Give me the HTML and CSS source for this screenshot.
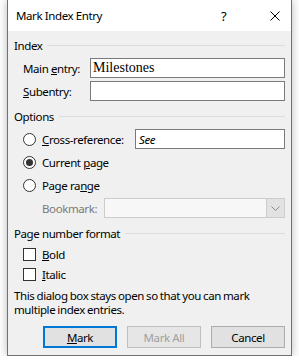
FILE: index.html
```html
<!DOCTYPE html>
<html lang="en">
<head>
  <meta charset="UTF-8">
  <title>Mark Index Entry</title>
  <link rel="stylesheet" href="styles.css">
</head>
<body>
  <div class="dialog">
    <div class="titlebar">
      <span class="title">Mark Index Entry</span>
      <span class="help">?</span>
      <span class="close">
        <svg width="10" height="10" viewBox="0 0 10 10"><path d="M0.5 0.5 L9.5 9.5 M9.5 0.5 L0.5 9.5" stroke="#000" stroke-width="1" fill="none"/></svg>
      </span>
    </div>

    <div class="content">
      <div class="group-head first"><span>Index</span></div>
      <div class="row row-gap-5">
        <span class="label">Main <u>e</u>ntry:</span>
        <div class="input wide serif">Milestones</div>
      </div>
      <div class="row">
        <span class="label"><u>S</u>ubentry:</span>
        <div class="input wide"></div>
      </div>

      <div class="group-head"><span>Options</span></div>
      <div class="row row-gap-5">
        <span class="radio"></span>
        <span class="label opt-label"><u>C</u>ross-reference:</span>
        <div class="input see">See</div>
      </div>
      <div class="row">
        <span class="radio checked"></span>
        <span class="label">Current <u>p</u>age</span>
      </div>
      <div class="row">
        <span class="radio"></span>
        <span class="label">Page ra<u>n</u>ge</span>
      </div>
      <div class="row">
        <span class="label disabled bookmark-label">Bookmark:</span>
        <div class="combo">
          <span class="combo-btn">
            <svg width="9" height="5" viewBox="0 0 9 5"><path d="M0.5 0.5 L4.5 4.5 L8.5 0.5" stroke="#8a8a8a" stroke-width="1" fill="none"/></svg>
          </span>
        </div>
      </div>

      <div class="group-head"><span>Page number format</span></div>
      <div class="row check-row first-check">
        <span class="checkbox"></span>
        <span class="label"><u>B</u>old</span>
      </div>
      <div class="row check-row">
        <span class="checkbox"></span>
        <span class="label"><u>I</u>talic</span>
      </div>

      <p class="note">This dialog box stays open so that you can mark multiple index entries.</p>

      <div class="buttons">
        <button class="btn default"><u>M</u>ark</button>
        <button class="btn" disabled>Mark All</button>
        <button class="btn">Cancel</button>
      </div>
    </div>
  </div>
</body>
</html>
```

FILE: styles.css
```css
/* Windows style dialog */
body {
  margin: 0;
  background-color: #fff;
  font-family: "Noto Sans", Arial, sans-serif;
  font-size: 11.5px;
  letter-spacing: -0.4px;
  color: #000;
}

.dialog {
  margin-left: 7px;
  width: 285px;
  height: 356px;
  box-sizing: border-box;
  background-color: #f0f0f0;
  border: 1px solid #707070;
  border-top: none;
  box-shadow: 0 0 9px rgba(0, 0, 0, 0.28);
}

.titlebar {
  display: flex;
  align-items: center;
  height: 31px;
  background-color: #fff;
}

.title {
  flex: 1;
  padding-left: 8px;
  padding-bottom: 1px;
}

.help {
  width: 31px;
  margin-right: 20px;
  text-align: center;
  font-size: 13px;
}

.close {
  width: 32px;
  display: flex;
  justify-content: center;
}

.content {
  padding: 0 6px;
}

/* group headings with the rule after them */
.group-head {
  display: flex;
  align-items: center;
  height: 16px;
  margin-top: 7px;
}

.group-head.first {
  margin-top: 6px;
}

.group-head::after {
  content: "";
  flex: 1;
  border-top: 1px solid #dcdcdc;
  margin-left: 5px;
}

.row {
  display: flex;
  align-items: center;
  height: 20px;
  margin-top: 3px;
  padding-left: 9px;
}

.row-gap-5 {
  margin-top: 5px;
}

.label {
  white-space: nowrap;
}

.input {
  height: 20px;
  box-sizing: border-box;
  background-color: #fff;
  border: 1px solid #7a7a7a;
  padding: 0 3px;
  display: flex;
  align-items: center;
}

.input.wide {
  width: 195px;
  margin-left: auto;
}

.input.serif {
  font-family: "Liberation Serif", "Times New Roman", serif;
  font-size: 14px;
  letter-spacing: 0;
  padding-left: 2px;
}

.input.see {
  width: 150px;
  margin-left: auto;
  font-style: italic;
}

.radio {
  width: 13px;
  height: 13px;
  box-sizing: border-box;
  border: 1px solid #333;
  border-radius: 50%;
  background-color: #fff;
  margin-right: 6px;
  display: flex;
  align-items: center;
  justify-content: center;
}

.radio.checked::after {
  content: "";
  width: 7px;
  height: 7px;
  border-radius: 50%;
  background-color: #333;
}

.bookmark-label {
  padding-left: 19px;
}

.disabled {
  color: #7a7a7a;
}

.combo {
  width: 181px;
  height: 20px;
  margin-left: auto;
  box-sizing: border-box;
  border: 1px solid #cccccc;
  background-color: #f7f7f7;
  display: flex;
  justify-content: flex-end;
}

.combo-btn {
  width: 17px;
  background-color: #e2e2e2;
  border-left: 1px solid #cccccc;
  display: flex;
  align-items: center;
  justify-content: center;
}

.check-row {
  margin-top: 0;
}

.first-check {
  margin-top: 3px;
}

.checkbox {
  width: 13px;
  height: 13px;
  box-sizing: border-box;
  border: 1px solid #333;
  background-color: #fff;
  margin-right: 6px;
}

.note {
  margin: 5px 0 0 0;
  line-height: 13.5px;
  word-spacing: -0.5px;
}

.buttons {
  display: flex;
  justify-content: flex-end;
  gap: 10px;
  margin-top: 10px;
}

.btn {
  width: 74px;
  height: 22px;
  padding: 0;
  font-family: inherit;
  font-size: 11.5px;
  letter-spacing: -0.4px;
  color: #000;
  background-color: #e1e1e1;
  border: 1px solid #adadad;
}

.btn.default {
  border: 2px solid #0078d7;
}

.btn:disabled {
  color: #a0a0a0;
  background-color: #e6e6e6;
  border-color: #bfbfbf;
}
```
